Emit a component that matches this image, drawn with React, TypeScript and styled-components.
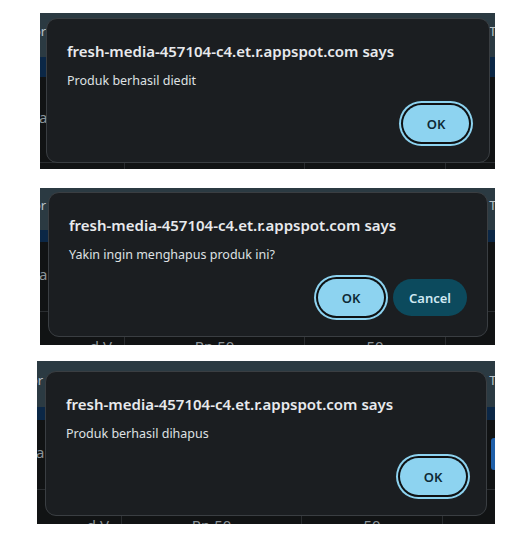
import React from "react";
import styled, { createGlobalStyle } from "styled-components";

const Global = createGlobalStyle`
  html, body { margin: 0; padding: 0; background: #ffffff; }
  body { font-family: "Noto Sans", "Open Sans", sans-serif; }
`;

const Page = styled.div`
  display: flex;
  flex-direction: column;
  align-items: flex-start;
  padding-top: 13px;
`;

const Panel = styled.section<{ $left: number; $top: number; $width: number }>`
  display: grid;
  margin-left: ${(p) => p.$left}px;
  margin-top: ${(p) => p.$top}px;
  width: ${(p) => p.$width}px;
  overflow: hidden;
  background: #0f1112;
`;

const Backdrop = styled.div`
  grid-area: 1 / 1;
  display: flex;
  flex-direction: column;
  font-family: "Noto Sans", sans-serif;
  font-size: 13px;
  color: #b9c3c8;
`;

const HeaderBand = styled.div<{ $h: number }>`
  height: ${(p) => p.$h}px;
  background: #2b3a42;
  display: flex;
  justify-content: space-between;
  align-items: center;
  padding-bottom: 8px;
  box-sizing: border-box;
`;

const Peek = styled.span<{ $side: "left" | "right" }>`
  ${(p) => (p.$side === "left" ? "margin-left: -7px;" : "margin-right: -9px;")}
  white-space: nowrap;
`;

const NavyStrip = styled.div<{ $h: number }>`
  height: ${(p) => p.$h}px;
  background: #0b2746;
`;

const BodyRow = styled.div<{ $h: number }>`
  height: ${(p) => p.$h}px;
  background: #111314;
  display: flex;
  align-items: center;
  justify-content: space-between;
  border-bottom: 1px solid #2a2d30;
  box-sizing: border-box;
  font-size: 15px;
  color: #8c9499;
  padding-bottom: 6px;
`;

const SideTab = styled.span`
  width: 4px;
  height: 32px;
  margin-top: 4px;
  background: #1f5fa8;
  border-radius: 3px 0 0 3px;
`;

const BottomRow = styled.div<{ $h: number }>`
  height: ${(p) => p.$h}px;
  display: grid;
  grid-template-columns: 84px 180px 141px 1fr;
  background: #111314;
`;

const Cell = styled.div`
  border-left: 1px solid #2a2d30;
  display: flex;
  justify-content: center;
  align-items: flex-end;
  font-size: 15px;
  color: #8c9499;
  line-height: 1;
  margin-bottom: -9px;
  &:first-child { border-left: none; justify-content: flex-end; padding-right: 12px; }
`;

const Dialog = styled.div<{ $m: string }>`
  grid-area: 1 / 1;
  margin: ${(p) => p.$m};
  background: #1b1e21;
  border: 1px solid #3a3e42;
  border-radius: 11px;
  padding: 21px 16px 16px 20px;
  display: flex;
  flex-direction: column;
  box-sizing: border-box;
  align-self: start;
`;

const Title = styled.h2`
  margin: 0;
  font-family: "Noto Sans", sans-serif;
  font-weight: 600;
  font-size: 15px;
  line-height: 22px;
  color: #e8eaed;
`;

const Message = styled.p`
  margin: 10px 0 0;
  font-family: "Noto Sans", sans-serif;
  font-size: 12.5px;
  line-height: 18px;
  color: #dfe1e3;
`;

const Actions = styled.div`
  display: flex;
  justify-content: flex-end;
  gap: 9px;
  margin-top: 11px;
  padding: 4px;
`;

const Button = styled.button<{ $primary?: boolean }>`
  height: 37px;
  min-width: 66px;
  padding: 0 16px;
  border: none;
  border-radius: 19px;
  font-family: "Noto Sans", sans-serif;
  font-weight: 600;
  font-size: 13px;
  cursor: pointer;
  background: ${(p) => (p.$primary ? "#8dd3f0" : "#0c4a5d")};
  color: ${(p) => (p.$primary ? "#0d2a36" : "#cfe8f2")};
  box-shadow: ${(p) =>
    p.$primary ? "0 0 0 2px #0e1113, 0 0 0 4px #8dd3f0" : "none"};
`;

type Cfg = {
  left: number;
  top: number;
  width: number;
  header: number;
  strip: number;
  row: number;
  bottom: number;
  dialogMargin: string;
  message: string;
  cancel?: boolean;
  tab?: boolean;
  cells: string[];
};

const panels: Cfg[] = [
  { left: 40, top: 0, width: 455, header: 44, strip: 20, row: 86, bottom: 6, dialogMargin: "5px 5px 0 6px", message: "Produk berhasil diedit", cells: ["", "", "", ""] },
  { left: 40, top: 19, width: 455, header: 42, strip: 12, row: 70, bottom: 33, dialogMargin: "4px 7px 0 8px", message: "Yakin ingin menghapus produk ini?", cancel: true, cells: ["d V", "Rp 50", "50", ""] },
  { left: 37, top: 16, width: 458, header: 46, strip: 13, row: 70, bottom: 34, dialogMargin: "10px 8px 0 8px", message: "Produk berhasil dihapus", tab: true, cells: ["d V", "Rp 50", "50", ""] },
];

export default function App() {
  return (
    <>
      <Global />
      <Page>
        {panels.map((c, i) => (
          <Panel key={i} $left={c.left} $top={c.top} $width={c.width}>
            <Backdrop>
              <HeaderBand $h={c.header}>
                <Peek $side="left">or</Peek>
                <Peek $side="right">TA</Peek>
              </HeaderBand>
              <NavyStrip $h={c.strip} />
              <BodyRow $h={c.row}>
                <Peek $side="left">ra</Peek>
                {c.tab && <SideTab />}
              </BodyRow>
              <BottomRow $h={c.bottom}>
                {c.cells.map((t, j) => (
                  <Cell key={j}>{t}</Cell>
                ))}
              </BottomRow>
            </Backdrop>
            <Dialog $m={c.dialogMargin} role="alertdialog">
              <Title>fresh-media-457104-c4.et.r.appspot.com says</Title>
              <Message>{c.message}</Message>
              <Actions>
                <Button $primary>OK</Button>
                {c.cancel && <Button>Cancel</Button>}
              </Actions>
            </Dialog>
          </Panel>
        ))}
      </Page>
    </>
  );
}
